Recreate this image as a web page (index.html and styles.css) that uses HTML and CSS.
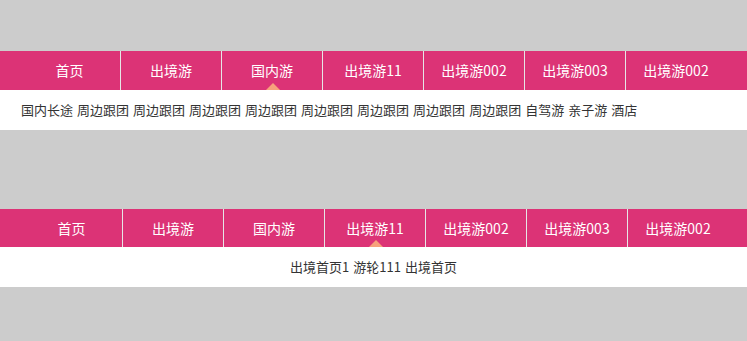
FILE: index.html
```html
<!DOCTYPE html>
<html lang="zh-CN">
<head>
    <meta charset="UTF-8">
    <meta name="viewport" content="width=device-width, initial-scale=1.0">
    <title>导航</title>
    <link rel="stylesheet" href="styles.css">
</head>
<body>
    <!-- 导航一 -->
    <div class="nav-block first">
        <ul class="nav">
            <li><a href="#">首页</a></li>
            <li><a href="#">出境游</a></li>
            <li class="active"><a href="#">国内游</a></li>
            <li><a href="#">出境游11</a></li>
            <li><a href="#">出境游002</a></li>
            <li><a href="#">出境游003</a></li>
            <li><a href="#">出境游002</a></li>
        </ul>
        <div class="subnav">
            <a href="#">国内长途</a>
            <a href="#">周边跟团</a>
            <a href="#">周边跟团</a>
            <a href="#">周边跟团</a>
            <a href="#">周边跟团</a>
            <a href="#">周边跟团</a>
            <a href="#">周边跟团</a>
            <a href="#">周边跟团</a>
            <a href="#">周边跟团</a>
            <a href="#">自驾游</a>
            <a href="#">亲子游</a>
            <a href="#">酒店</a>
        </div>
    </div>

    <!-- 导航二 -->
    <div class="nav-block second">
        <ul class="nav">
            <li><a href="#">首页</a></li>
            <li><a href="#">出境游</a></li>
            <li><a href="#">国内游</a></li>
            <li class="active"><a href="#">出境游11</a></li>
            <li><a href="#">出境游002</a></li>
            <li><a href="#">出境游003</a></li>
            <li><a href="#">出境游002</a></li>
        </ul>
        <div class="subnav center">
            <a href="#">出境首页1</a>
            <a href="#">游轮111</a>
            <a href="#">出境首页</a>
        </div>
    </div>
</body>
</html>
```

FILE: styles.css
```css
body {
    margin: 0;
    padding: 0;
    background-color: #cccccc;
    font-family: "Noto Sans CJK SC", "Microsoft YaHei", sans-serif;
}
a {
    text-decoration: none;
}
.nav-block.first {
    margin-top: 51px;
}
.nav-block.second {
    margin-top: 79px;
}
.nav {
    display: flex;
    margin: 0;
    padding: 0 0 0 19px;
    list-style: none;
    background-color: #dc3376;
    height: 39px;
}
.second .nav {
    padding-left: 21px;
    height: 38px;
}
.nav li {
    position: relative;
    width: 101px;
    box-sizing: border-box;
    text-align: center;
}
.nav li + li {
    border-left: 1px solid #e6e6e6;
}
.nav li a {
    display: block;
    color: #ffffff;
    font-size: 14px;
    line-height: 39px;
}
.second .nav li a {
    line-height: 38px;
}
/* 当前项下方的小三角 */
.nav li.active::after {
    content: "";
    position: absolute;
    left: 50%;
    bottom: 0;
    margin-left: -6px;
    border-left: 7.5px solid transparent;
    border-right: 7.5px solid transparent;
    border-bottom: 7px solid #f7a17c;
}
.subnav {
    display: flex;
    gap: 4px;
    padding-left: 21px;
    height: 40px;
    align-items: center;
    background-color: #ffffff;
}
.subnav.center {
    justify-content: center;
    padding-left: 0;
}
.subnav a {
    color: #333333;
    font-size: 13px;
    line-height: 40px;
}
```
